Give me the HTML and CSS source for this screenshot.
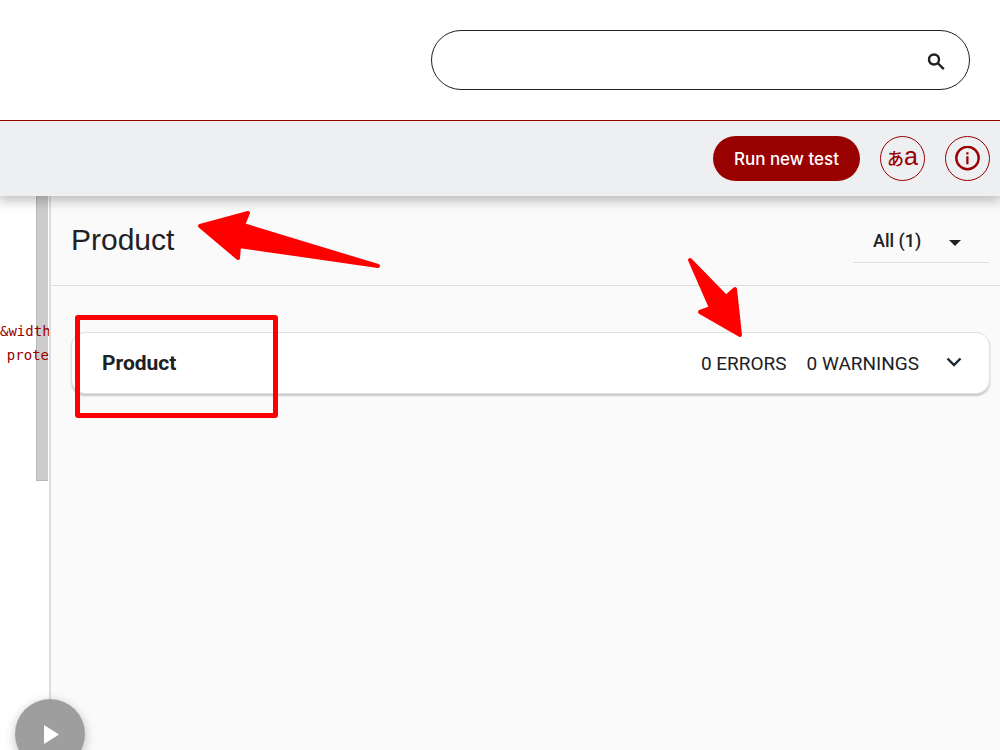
FILE: index.html
```html
<!DOCTYPE html>
<html lang="en">
<head>
<meta charset="utf-8">
<title>Test results</title>
<link rel="stylesheet" href="styles.css">
</head>
<body>
<header class="top">
  <form class="search" role="search">
    <input class="search-input" type="search" aria-label="Search">
    <button class="search-button" type="button" aria-label="Search">
      <svg width="24" height="24" viewBox="0 0 24 24" fill="none" stroke="currentColor" stroke-width="2.400"><circle cx="9" cy="9.500" r="5"/><path d="M12.600 13 18.800 19.200"/></svg>
    </button>
  </form>
</header>
<nav class="toolbar">
  <button class="run" type="button">Run new test</button>
  <button class="round language" type="button" aria-label="Change language"><span class="kana">あ</span><span class="latin">a</span></button>
  <button class="round" type="button" aria-label="Information">
    <svg width="25" height="25" viewBox="0 0 25 25"><circle cx="12.500" cy="12" r="11.200" fill="none" stroke="currentColor" stroke-width="2.400"/><path d="M11.300 6.200h2.200v2.200h-2.200zM11.300 10.200h2.200v8h-2.200z" fill="currentColor"/></svg>
  </button>
</nav>
<main class="workspace">
  <section class="source">
    <div class="thumb"></div>
    <pre class="code">&amp;width
prote</pre>
  </section>
  <section class="results">
    <div class="results-head">
      <h1 class="title">Product</h1>
      <div class="filter">
        <select class="filter-select" aria-label="Filter items"><option>All (1)</option></select>
        <svg class="caret" width="12" height="6" viewBox="0 0 12 6"><path d="M0 0h12L6 6z" fill="currentColor"/></svg>
      </div>
    </div>
    <div class="list">
      <button class="card" type="button">
        <span class="card-title">Product</span>
        <span class="count">0 ERRORS</span>
        <span class="count">0 WARNINGS</span>
        <svg class="chevron" width="16" height="12" viewBox="0 0 16 12"><path d="M1.500 1.500 8 8l6.500-6.500" fill="none" stroke="currentColor" stroke-width="2.400"/></svg>
      </button>
    </div>
  </section>
</main>
<button class="play" type="button" aria-label="Run">
  <svg width="18" height="19" viewBox="0 0 18 19"><path d="M3 0v19l15-9.500z" fill="currentColor"/></svg>
</button>
<div class="frame"></div>
<svg class="arrow arrow-title" width="184" height="60" viewBox="197 209 184 60"><path d="M200 226 248 213 243 225 378 266 239 246 238 258z"/></svg>
<svg class="arrow arrow-count" width="57" height="82" viewBox="687 257 57 82"><path d="M690 260 726 297 735 289 740 335 700 312 711 308z"/></svg>
</body>
</html>
```
FILE: styles.css
```css
* { box-sizing: border-box; }
body {
  margin: 0;
  height: 100vh;
  overflow: hidden;
  display: flex;
  flex-direction: column;
  position: relative;
  background: #fff;
  color: #202124;
  font-family: Roboto, sans-serif;
}
button, input, select { font: inherit; color: inherit; margin: 0; }
button { cursor: pointer; }
svg { display: block; }
.top {
  position: relative;
  z-index: 2;
  display: flex;
  justify-content: flex-end;
  padding: 30px;
  background: #fff;
  border-bottom: 1px solid #900;
}
.search {
  display: flex;
  align-items: center;
  width: 539px;
  max-width: 100%;
  height: 60px;
  padding: 0 20px;
  border: 1px solid #202124;
  border-radius: 30px;
}
.search-input {
  flex: 1;
  min-width: 0;
  border: 0;
  outline: 0;
  background: none;
  font-size: 18px;
}
.search-button { padding: 4px 0 0; border: 0; background: none; }
.toolbar {
  position: relative;
  z-index: 1;
  display: flex;
  align-items: center;
  justify-content: flex-end;
  gap: 20px;
  padding: 15px 10px;
  background: #edeff1;
  box-shadow: 0 2px 12px 2px rgba(0, 0, 0, .28);
}
.run {
  height: 45px;
  padding: 0 21px;
  border: 0;
  border-radius: 23px;
  background: #900;
  color: #fff;
  font: 500 17px Inter, sans-serif;
}
.round {
  display: flex;
  align-items: center;
  justify-content: center;
  width: 45px;
  height: 45px;
  padding: 0;
  border: 1px solid #900;
  border-radius: 50%;
  background: none;
  color: #900;
}
.language { align-items: baseline; }
.kana { font: 500 17px/38px "Noto Sans CJK JP", sans-serif; }
.latin { font: 500 25px/38px "Liberation Sans", sans-serif; }
.workspace { flex: 1; display: flex; min-height: 0; }
.source {
  position: relative;
  width: 51px;
  flex: none;
  overflow: hidden;
  border-right: 2px solid #ddd;
}
.thumb {
  position: absolute;
  top: 0;
  right: 1px;
  width: 12px;
  height: 285px;
  background: #ccc;
  border-left: 1px solid #b8b8b8;
  border-bottom: 1px solid #b8b8b8;
}
.code {
  position: relative;
  margin: 0;
  padding-top: 123px;
  color: #900;
  font: 14px/24px "DejaVu Sans Mono", monospace;
  text-align: right;
}
.results { flex: 1; min-width: 0; background: #fafafa; }
.results-head {
  display: flex;
  align-items: flex-start;
  justify-content: space-between;
  height: 90px;
  padding: 24px 11px 0 20px;
  border-bottom: 1px solid #ddd;
}
.title { margin: 0; font: 400 30px/40px "Liberation Sans", sans-serif; }
.filter {
  display: flex;
  align-items: center;
  width: 136px;
  height: 43px;
  padding: 0 28px 0 20px;
  border-bottom: 1px solid #ddd;
}
.filter-select {
  flex: 1;
  min-width: 0;
  padding: 0 0 2px;
  border: 0;
  appearance: none;
  background: none;
  font-size: 18px;
  font-weight: 500;
}
.caret { margin-top: 4px; }
.list { padding: 46px 10px 0 20px; }
.card {
  display: flex;
  align-items: center;
  gap: 20px;
  width: 100%;
  height: 62px;
  padding: 0 27px 0 30px;
  border: 1px solid #e0e0e0;
  border-radius: 14px;
  background: #fff;
  box-shadow: 0 2px 2px rgba(0, 0, 0, .2);
  text-align: left;
}
.card-title { flex: 1; font-size: 21px; font-weight: 700; }
.count { font-size: 19px; }
.chevron { margin-left: 7px; color: #182533; }
.play {
  position: absolute;
  z-index: 2;
  left: 15px;
  top: calc(100vh - 51px);
  display: flex;
  align-items: center;
  justify-content: center;
  width: 70px;
  height: 70px;
  padding: 0;
  border: 0;
  border-radius: 50%;
  background: #9e9e9e;
  color: #fff;
  box-shadow: 0 3px 12px rgba(0, 0, 0, .24);
}
.frame {
  position: absolute;
  left: 75px;
  top: 315px;
  width: 203px;
  height: 103px;
  border: 5px solid red;
  border-radius: 3px;
  pointer-events: none;
}
.arrow {
  position: absolute;
  z-index: 2;
  pointer-events: none;
  fill: red;
  stroke: red;
  stroke-width: 4;
  stroke-linejoin: round;
}
.arrow-title { left: 197px; top: 209px; }
.arrow-count { left: 687px; top: 257px; }
```
